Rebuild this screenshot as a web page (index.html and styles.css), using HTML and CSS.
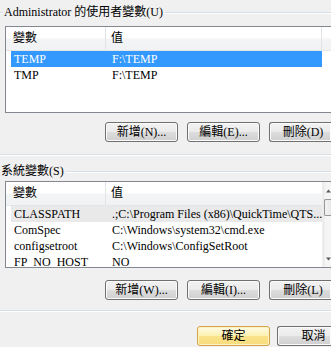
FILE: index.html
```html
<!DOCTYPE html>
<html lang="zh-Hant">
<head>
    <meta charset="UTF-8">
    <title>環境變數</title>
    <link rel="stylesheet" href="styles.css">
</head>
<body>
    <div class="page">
        <div class="legend">
            <span class="lead"></span>
            <span class="legend-text">Administrator 的使用者變數(U)</span>
            <span class="rule"></span>
        </div>
        <div class="list">
            <div class="list-body">
                <div class="head">
                    <div class="hc c1">變數</div>
                    <div class="hc c2">值</div>
                    <div class="hc c3"></div>
                </div>
                <div class="row sel">
                    <div class="cell k">TEMP</div>
                    <div class="cell v">F:\TEMP</div>
                </div>
                <div class="row">
                    <div class="cell k">TMP</div>
                    <div class="cell v">F:\TEMP</div>
                </div>
            </div>
        </div>
        <div class="btns">
            <button class="btn">新增(N)...</button>
            <button class="btn">編輯(E)...</button>
            <button class="btn cut">刪除(D)</button>
        </div>
        <div class="sep sep1"></div>

        <div class="legend legend2">
            <span class="legend-text">系統變數(S)</span>
            <span class="rule"></span>
        </div>
        <div class="list">
            <div class="list-body">
                <div class="head">
                    <div class="hc c1">變數</div>
                    <div class="hc c2 last">值</div>
                </div>
                <div class="row dim">
                    <div class="cell k">CLASSPATH</div>
                    <div class="cell v">.;C:\Program Files (x86)\QuickTime\QTS...</div>
                </div>
                <div class="row">
                    <div class="cell k">ComSpec</div>
                    <div class="cell v">C:\Windows\system32\cmd.exe</div>
                </div>
                <div class="row">
                    <div class="cell k">configsetroot</div>
                    <div class="cell v">C:\Windows\ConfigSetRoot</div>
                </div>
                <div class="row">
                    <div class="cell k">FP_NO_HOST</div>
                    <div class="cell v">NO</div>
                </div>
            </div>
            <div class="scroll">
                <div class="arrow"><svg width="7" height="4" viewBox="0 0 7 4"><path d="M0 4 L3.5 0 L7 4 Z" fill="#5b5b5b"/></svg></div>
                <div class="thumb"></div>
                <div class="track"></div>
                <div class="arrow"><svg width="7" height="4" viewBox="0 0 7 4"><path d="M0 0 L3.5 4 L7 0 Z" fill="#5b5b5b"/></svg></div>
            </div>
        </div>
        <div class="btns btns2">
            <button class="btn">新增(W)...</button>
            <button class="btn">編輯(I)...</button>
            <button class="btn cut">刪除(L)</button>
        </div>
        <div class="sep sep2"></div>
        <div class="btns btns3">
            <button class="btn ok">確定</button>
            <button class="btn cut">取消</button>
        </div>
    </div>
</body>
</html>
```

FILE: styles.css
```css
*{
    margin: 0;
    padding: 0;
    box-sizing: border-box;
}
body{
    background-color: #f0f0f0;
    overflow: hidden;
    font-family: "Liberation Serif", "Noto Sans CJK TC", serif;
    font-size: 12px;
    color: #000;
}
.page{
    width: 331px;
    overflow: hidden;
}

.legend{
    display: flex;
    height: 24px;
    align-items: flex-start;
}
.legend .lead{
    width: 3px;
    margin-top: 12px;
    height: 2px;
    border-top: 1px solid #d5dfe5;
    border-bottom: 1px solid #fff;
}
.legend-text{
    padding: 0 2px 0 1px;
    margin-top: 5px;
    line-height: 15px;
    white-space: nowrap;
}
.legend .rule{
    flex: 1;
    margin-top: 12px;
    height: 2px;
    border-top: 1px solid #d5dfe5;
    border-bottom: 1px solid #fff;
}
.legend2{
    height: 25px;
}
.legend2 .legend-text{
    margin-top: 8px;
}
.legend2 .rule{
    margin-top: 15px;
}

/* lists run past the right edge of the window, so no right border */
.list{
    display: flex;
    margin: 2px 0 0 5px;
    height: 87px;
    border: 1px solid #828790;
    border-right: none;
    background-color: #fff;
    overflow: hidden;
}
.legend2 + .list{
    margin-top: 0;
}
.list-body{
    flex: 1;
    min-width: 0;
}
.head{
    display: flex;
    height: 24px;
    border-bottom: 1px solid #e5e5e5;
    background: linear-gradient(#ffffff, #ffffff 45%, #f3f4f6 55%, #f1f2f4);
}
.hc{
    line-height: 23px;
    border-right: 1px solid #e3e4e8;
    white-space: nowrap;
}
.c1{
    width: 100px;
    padding-left: 7px;
}
.c2{
    width: 216px;
    padding-left: 5px;
}
.c2.last{
    flex: 1;
    border-right: none;
}
.c3{
    flex: 1;
    border-right: none;
}

.row{
    display: flex;
    height: 16px;
    margin-left: 5px;
    width: 311px;
    line-height: 16px;
    white-space: nowrap;
}
.row.sel{
    background-color: #3399ff;
    color: #fff;
}
.row.dim{
    background-color: #e9e9e9;
}
.cell.k{
    width: 95px;
    padding-left: 3px;
    overflow: hidden;
}
.cell.v{
    flex: 1;
    padding-left: 6px;
    overflow: hidden;
}

.scroll{
    width: 9px;
    display: flex;
    flex-direction: column;
    background: linear-gradient(90deg, #e6e6e6, #f5f5f5 30%, #f5f5f5);
    border-left: 1px solid #f0f0f0;
}
.arrow{
    height: 17px;
    display: flex;
    align-items: center;
    padding-left: 3px;
    overflow: hidden;
}
.thumb{
    height: 17px;
    margin-left: 1px;
    border: 1px solid #979797;
    border-right: none;
    border-radius: 2px 0 0 2px;
    background: linear-gradient(90deg, #f3f3f3, #e8e8e8);
}
.track{
    flex: 1;
}

.btns{
    display: flex;
    gap: 9px;
    margin: 9px 0 0 105px;
}
.btns2{
    margin-top: 12px;
}
.btns3{
    gap: 7px;
    margin: 14px 0 0 197px;
}
.btn{
    flex: none;
    width: 73px;
    height: 20px;
    border: 1px solid #707070;
    border-radius: 3px;
    font-family: "Liberation Serif", "Noto Sans CJK TC", serif;
    font-size: 12px;
    line-height: 17px;
    color: #000;
    box-shadow: inset 0 0 0 1px #fbfbfb;
    background: linear-gradient(#f2f2f2, #ebebeb 48%, #dddddd 52%, #cfcfcf);
}
/* the last button in each row is cut by the window edge */
.btn.cut{
    flex: 1;
    width: auto;
    border-right: none;
    border-radius: 3px 0 0 3px;
    padding-left: 5px;
}
.btns3 .btn.cut{
    padding-left: 18px;
}
.btn.ok{
    border-color: #d3a54b;
    box-shadow: inset 0 0 0 1px #fdf3c0;
    background: linear-gradient(#fffbe6, #fdf0b2 48%, #fbe38a 52%, #f7dc7c);
}

.sep{
    height: 2px;
    border-top: 1px solid #d5dfe5;
    border-bottom: 1px solid #fff;
}
.sep1{
    margin-top: 12px;
}
.sep2{
    margin-top: 10px;
}
```
